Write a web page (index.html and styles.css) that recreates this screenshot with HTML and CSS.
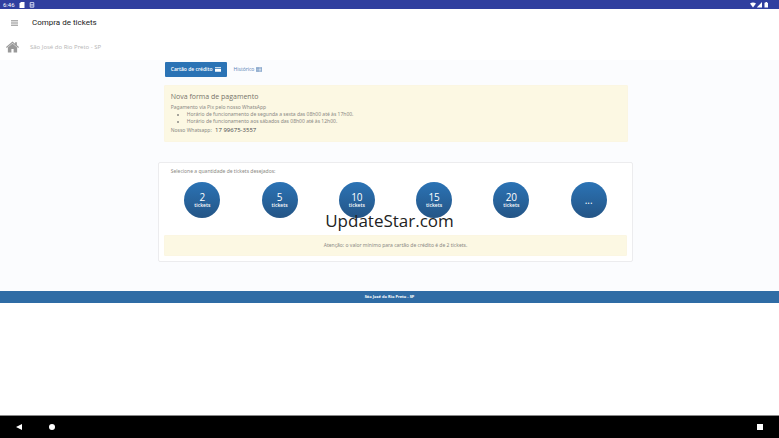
FILE: index.html
```
<!DOCTYPE html>
<html lang="pt-BR">
<head>
  <meta charset="UTF-8">
  <meta name="viewport" content="width=device-width, initial-scale=1.0">
  <title>Compra de tickets</title>
  <link rel="stylesheet" href="styles.css">
</head>
<body>
  <!-- Status bar -->
  <div class="status-bar">
    <span class="clock">6:46</span>
    <svg class="status-icon" viewBox="0 0 6 6"><path d="M2 0h3.500v6h-5v-4.500z" fill="#fff"/></svg>
    <svg class="status-icon status-app" viewBox="0 0 6 6"><path d="M1.200 .6h3.600v2.200h-3.600zM1.200 2.800v2.400h3.600v-2.400M3 3.400v1" fill="none" stroke="#dfe3f6" stroke-width=".9"/></svg>
    <svg class="signal" viewBox="0 0 20 6">
      <path d="M0 1.400Q3-.6 6 1.400L3 5.500z" fill="#fff"/>
      <path d="M12 0v5.500H6.800z" fill="#fff"/>
      <path d="M14.500 .8h1V0h1.500v.8h1v4.700h-3.500z" fill="#fff"/>
    </svg>
  </div>

  <header class="app-bar">
    <button class="menu-btn" aria-label="Menu">
      <svg viewBox="0 0 8 6"><path d="M0 .5h8M0 3h8M0 5.500h8" stroke="#666" stroke-width=".9"/></svg>
    </button>
    <h1>Compra de tickets</h1>
  </header>

  <div class="location">
    <a href="#" aria-label="Início">
      <svg class="home-icon" viewBox="0 0 14 12"><path d="M7 0L0 6l.8 1L7 1.700 13.200 7l.8-1-2.300-2V.8H9.800v1.600z" fill="#999"/><path d="M7 2.300L2 6.600V12h3.800V8.200h2.400V12H12V6.600z" fill="#999"/></svg>
    </a>
    <span>São José do Rio Preto - SP</span>
  </div>

  <main class="content">
    <div class="container">
      <nav class="tabs">
        <button class="tab active">Cartão de crédito
          <svg viewBox="0 0 6 5"><path d="M0 .2h6v1H0zM0 2h6v2.800H0z" fill="#fff"/></svg>
        </button>
        <button class="tab">Histórico
          <svg viewBox="0 0 6 5"><path d="M.3.3h5.400v4.400H.3zM.3 1.700h5.400M.3 3.200h5.400M2 .3v4.400" fill="none" stroke="#5581b5" stroke-width=".6"/></svg>
        </button>
      </nav>

      <section class="alert payment">
        <h2>Nova forma de pagamento</h2>
        <p>Pagamento via Pix pelo nosso WhatsApp</p>
        <ul>
          <li>Horário de funcionamento de segunda a sexta das 08h00 até às 17h00.</li>
          <li>Horário de funcionamento aos sábados das 08h00 até às 12h00.</li>
        </ul>
        <p class="phone">Nosso Whatsapp: <strong>17 99675-3557</strong></p>
      </section>

      <section class="card">
        <p class="card-title">Selecione a quantidade de tickets desejados:</p>
        <div class="tickets">
          <button class="ticket"><b>2</b>tickets</button>
          <button class="ticket"><b>5</b>tickets</button>
          <button class="ticket"><b>10</b>tickets</button>
          <button class="ticket"><b>15</b>tickets</button>
          <button class="ticket"><b>20</b>tickets</button>
          <button class="ticket"><b>...</b></button>
        </div>
        <p class="alert notice">Atenção: o valor mínimo para cartão de crédito é de 2 tickets.</p>
      </section>
    </div>
  </main>

  <footer class="footer">São José do Rio Preto - SP</footer>

  <!-- System navigation -->
  <nav class="nav-bar">
    <button aria-label="Voltar"><svg viewBox="0 0 6 6"><path d="M6 0v6L0 3z" fill="#fff"/></svg></button>
    <button aria-label="Tela inicial"><svg viewBox="0 0 6 6"><circle cx="3" cy="3" r="3" fill="#fff"/></svg></button>
    <button class="recent" aria-label="Recentes"><svg viewBox="0 0 6 6"><path d="M0 0h6v6H0z" fill="#fff"/></svg></button>
  </nav>

  <div class="watermark">UpdateStar.com</div>
</body>
</html>
```
FILE: styles.css
```
:root {
  --blue: #2b73b5;
  --footer-blue: #2f6ca5;
  --alert: #fcf8e3;
  --muted: #8b8a85;
}

* {
  box-sizing: border-box;
}

body {
  margin: 0;
  min-height: 100vh;
  display: flex;
  flex-direction: column;
  background: #fff;
  color: var(--muted);
  font-family: "Noto Sans", "Open Sans", sans-serif;
  font-size: 5px;
  line-height: 7px;
}

h1, h2, p, ul {
  margin: 0;
  font-weight: normal;
}

button {
  border: none;
  padding: 0;
  background: none;
  font-family: "Open Sans", sans-serif;
  font-size: inherit;
  line-height: inherit;
  cursor: pointer;
}

svg {
  display: block;
}

/* Status bar */
.status-bar {
  display: flex;
  align-items: center;
  height: 9px;
  padding: 0 9px 0 3px;
  background: #303f9f;
  color: #fff;
  font-family: Roboto, sans-serif;
  font-size: 6px;
}

.clock {
  width: 16px;
}

.status-icon {
  width: 6px;
  height: 6px;
}

.status-app {
  margin-left: 4px;
}

.signal {
  width: 20px;
  height: 6px;
  margin-left: auto;
}

/* Header */
.app-bar {
  display: flex;
  align-items: center;
  height: 28px;
  padding-left: 11px;
}

.menu-btn svg {
  width: 7px;
  height: 6px;
}

.app-bar h1 {
  margin-left: 14px;
  color: #222;
  font-family: Roboto, sans-serif;
  font-size: 8px;
  line-height: 12px;
}

.location {
  display: flex;
  align-items: center;
  gap: 11px;
  height: 23px;
  padding: 0 0 3px 6px;
  color: #b5b5b5;
  font-family: "Open Sans", sans-serif;
  font-size: 6px;
}

.home-icon {
  width: 13px;
  height: 12px;
}

/* Content */
.content {
  padding: 2px 0 29px 12px;
  background: #fbfcfe;
}

.container {
  width: 62%;
  max-width: 1140px;
  min-width: 474px;
  margin: 0 auto;
}

.tabs {
  display: flex;
  padding-left: 7px;
}

.tab {
  display: flex;
  align-items: center;
  gap: 2px;
  height: 15px;
  padding: 0 7px;
  border-radius: 1px;
  color: #5581b5;
}

.tab.active {
  padding: 0 6px;
  background: var(--blue);
  color: #fff;
  font-weight: 600;
}

.tab svg {
  width: 6px;
  height: 5px;
}

.alert {
  border: 1px solid #fbf6e2;
  border-radius: 1px;
  background: var(--alert);
}

.payment {
  margin: 8px 5px 20px 6px;
  padding: 6px 6px 5px;
}

.payment h2 {
  margin-bottom: 3px;
  color: #77746a;
  font-family: "Open Sans", sans-serif;
  font-size: 7px;
  line-height: 9px;
}

.payment ul {
  padding-left: 16px;
}

.phone {
  line-height: 11px;
}

.phone strong {
  margin-left: 2px;
  color: #555;
  font-size: 6px;
  font-weight: normal;
}

.card {
  padding: 5px;
  border: 1px solid #ececee;
  border-radius: 2px;
  background: #fff;
}

.card-title {
  padding-left: 7px;
}

.tickets {
  display: grid;
  grid-template-columns: repeat(6, 1fr);
  justify-items: center;
  margin: 7px 0 17px;
}

.ticket {
  width: 36px;
  height: 36px;
  border-radius: 50%;
  background: linear-gradient(#2b73b5, #245586);
  color: #fff;
  font-weight: 600;
}

.ticket b {
  display: block;
  font-size: 10px;
  font-weight: normal;
  line-height: 10px;
}

.notice {
  padding: 6px;
  text-align: center;
}

/* Footer */
.footer {
  height: 12px;
  background: var(--footer-blue);
  color: #fff;
  font-size: 4px;
  font-weight: bold;
  line-height: 12px;
  text-align: center;
}

.nav-bar {
  display: flex;
  align-items: center;
  gap: 27px;
  height: 23px;
  margin-top: auto;
  padding: 0 16px;
  border-top: 1px solid #888;
  background: #000;
}

.nav-bar svg {
  width: 6px;
  height: 6px;
}

.nav-bar .recent {
  margin-left: auto;
}

.watermark {
  position: absolute;
  top: 208px;
  left: 0;
  right: 0;
  color: #222;
  font-family: "Open Sans", sans-serif;
  font-size: 17px;
  line-height: 26px;
  text-align: center;
  pointer-events: none;
}
```
